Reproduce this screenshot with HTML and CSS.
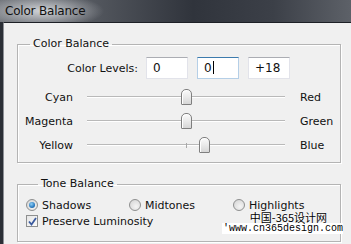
FILE: index.html
```html
<!DOCTYPE html>
<html lang="en">
<head>
  <meta charset="UTF-8">
  <title>Color Balance</title>
  <link rel="stylesheet" href="styles.css">
</head>
<body>
  <div class="cb-window">
    <div class="cb-title"><span class="cb-title-text">Color Balance</span></div>
    <div class="cb-frame">
      <div class="cb-panel">

        <fieldset class="cb-group cb-group-color">
          <legend>Color Balance</legend>
          <div class="cb-levels">
            <span class="cb-levels-label">Color Levels:</span>
            <div class="cb-input">0</div>
            <div class="cb-input focus">0<i class="caret"></i></div>
            <div class="cb-input">+18</div>
          </div>
          <div class="cb-sliders">
            <div class="cb-slider">
              <span class="cb-slider-left">Cyan</span>
              <div class="cb-track"><span class="thumb" style="left: 50%;"></span></div>
              <span class="cb-slider-right">Red</span>
            </div>
            <div class="cb-slider">
              <span class="cb-slider-left">Magenta</span>
              <div class="cb-track"><span class="thumb" style="left: 50%;"></span></div>
              <span class="cb-slider-right">Green</span>
            </div>
            <div class="cb-slider">
              <span class="cb-slider-left">Yellow</span>
              <div class="cb-track"><span class="thumb" style="left: 59%;"></span></div>
              <span class="cb-slider-right">Blue</span>
            </div>
          </div>
        </fieldset>

        <fieldset class="cb-group cb-group-tone">
          <legend>Tone Balance</legend>
          <div class="cb-radios">
            <label class="cb-option"><span class="radio checked"></span>Shadows</label>
            <label class="cb-option"><span class="radio"></span>Midtones</label>
            <label class="cb-option"><span class="radio"></span>Highlights</label>
          </div>
          <label class="cb-option cb-check-row">
            <span class="check">
              <svg width="9" height="9" viewBox="0 0 9 9"><path d="M1 4.5 L3.5 7.5 L8 1" fill="none" stroke="#3a5a9e" stroke-width="1.8"/></svg>
            </span>Preserve Luminosity
          </label>
        </fieldset>

        <div class="watermark">
          <div class="wm-cn">中国-365设计网</div>
          <div class="wm-url">'www.cn365design.com</div>
        </div>

      </div>
    </div>
  </div>
</body>
</html>
```

FILE: styles.css
```css
/*reset*/
body, div, fieldset, legend, label {
    margin: 0;
    padding: 0;
}

body {
    width: 351px;
    height: 244px;
    overflow: hidden;
    background: #2a2e35;
    font-family: "DejaVu Sans", sans-serif;
    font-size: 11px;
    color: #111;
}

/*window*/
.cb-window {
    width: 351px;
    height: 244px;
    display: flex;
    flex-direction: column;
}

.cb-title {
    height: 22px;
    line-height: 22px;
    padding-left: 5px;
    background:
        radial-gradient(ellipse 62px 17px at 42px 11px, rgba(222, 224, 228, .9), rgba(222, 224, 228, 0) 100%),
        linear-gradient(90deg, #6c7076 0, #555960 25%, #30343c 55%, #3c4048 78%, #5d6168 100%);
    font-size: 12px;
}

.cb-title-text {
    color: #101010;
    letter-spacing: -.2px;
}

.cb-frame {
    flex: 1;
    display: flex;
    padding-left: 3px;
    background: #2b2f36;
}

.cb-panel {
    flex: 1;
    position: relative;
    background: #f0f0f0;
    border-top: 1px solid #1d2026;
    border-left: 1px solid #8d9096;
}

/*group boxes*/
.cb-group {
    box-sizing: border-box;
    width: 324px;
    margin-left: 13px;
    border: 1px solid #b4b4b4;
    box-shadow: inset 1px 1px 0 #fff, 1px 1px 0 #fff;
    padding: 0;
}

.cb-group legend {
    margin-left: 12px;
    padding: 0 3px;
    line-height: 14px;
}

.cb-group-color {
    margin-top: 14px;
    padding-bottom: 5px;
}

.cb-group-tone {
    margin-top: 14px;
    padding: 0 0 12px 8px;
}

/*color levels*/
.cb-levels {
    display: flex;
    align-items: center;
    margin-top: 6px;
    height: 22px;
}

.cb-levels-label {
    width: 120px;
    text-align: right;
    margin-right: 8px;
}

.cb-input {
    box-sizing: border-box;
    width: 42px;
    height: 22px;
    margin-right: 9px;
    padding-left: 6px;
    line-height: 20px;
    background: #fff;
    border: 1px solid #e2e3ea;
    border-top-color: #abadb3;
    font-size: 12px;
}

.cb-input.focus {
    border-color: #b5cfe7;
    border-top-color: #3d7bad;
}

.cb-input .caret {
    display: inline-block;
    width: 1px;
    height: 13px;
    margin-left: 1px;
    vertical-align: -2px;
    background: #000;
}

/*sliders*/
.cb-sliders {
    margin-top: 6px;
}

.cb-slider {
    display: flex;
    align-items: center;
    height: 24px;
}

.cb-slider-left {
    width: 55px;
    text-align: right;
    margin-right: 14px;
}

.cb-slider-right {
    margin-left: 15px;
}

.cb-track {
    position: relative;
    width: 198px;
    height: 18px;
}

.cb-track:before {
    content: "";
    position: absolute;
    left: 0;
    right: 0;
    top: 8px;
    border-top: 1px solid #b9b9b9;
    border-bottom: 1px solid #fff;
}

.cb-track:after {
    content: "";
    position: absolute;
    left: 50%;
    top: 7px;
    width: 1px;
    height: 5px;
    background: #a8a8a8;
}

.cb-track .thumb {
    position: absolute;
    top: 1px;
    z-index: 2;
    box-sizing: border-box;
    width: 11px;
    height: 16px;
    margin-left: -5px;
    border: 1px solid #7f7f7f;
    border-radius: 5px 5px 1px 1px;
    background: linear-gradient(180deg, #fbfbfb 0, #eaeaea 50%, #d6d6d6 100%);
    box-shadow: inset 1px 1px 0 #fff;
}

/*tone balance*/
.cb-radios {
    display: grid;
    grid-template-columns: 103px 104px auto;
    margin-top: 6px;
    height: 16px;
    align-items: center;
}

.cb-option {
    display: flex;
    align-items: center;
}

.cb-check-row {
    height: 16px;
}

.radio {
    box-sizing: border-box;
    width: 12px;
    height: 12px;
    margin-right: 4px;
    border: 1px solid #8e8f8f;
    border-radius: 50%;
    background: radial-gradient(circle at 60% 65%, #f4f4f4 0, #dcdcdc 70%, #cfcfcf 100%);
    display: flex;
    align-items: center;
    justify-content: center;
}

.radio.checked:after {
    content: "";
    width: 6px;
    height: 6px;
    border-radius: 50%;
    background: radial-gradient(circle at 40% 35%, #8fd0f7 0, #2a7bc0 60%, #1b4f84 100%);
}

.check {
    box-sizing: border-box;
    width: 12px;
    height: 12px;
    margin-right: 4px;
    border: 1px solid #8e8f8f;
    background: linear-gradient(135deg, #e6e6e6 0, #fafafa 100%);
    display: flex;
    align-items: center;
    justify-content: center;
}

/*watermark*/
.watermark {
    position: absolute;
    right: 8px;
    bottom: 10px;
    text-align: right;
    color: #000;
    text-shadow: 0 0 2px #fff, 0 0 2px #fff;
}

.wm-cn {
    font-family: "Noto Sans CJK SC", sans-serif;
    font-size: 11px;
    line-height: 12px;
    margin-right: 16px;
}

.wm-url {
    font-family: "Liberation Mono", monospace;
    font-size: 10px;
    line-height: 11px;
    background: #fff;
    padding-left: 1px;
}
```
